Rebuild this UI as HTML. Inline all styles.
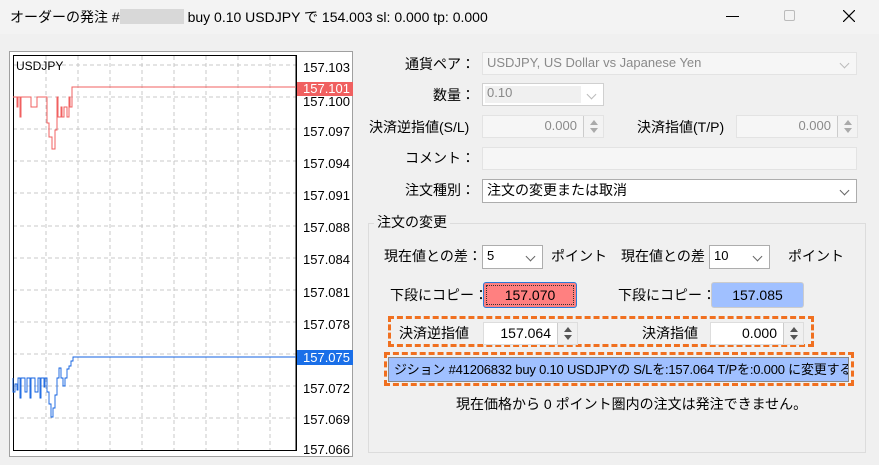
<!DOCTYPE html><html><head><meta charset="utf-8"><style>
*{box-sizing:border-box;margin:0;padding:0}
body{width:879px;height:465px;background:#f0f0f0;font-family:"Liberation Sans","Noto Sans CJK JP",sans-serif;font-size:13px;color:#000;position:relative;overflow:hidden}
.a{position:absolute}
.lbl{position:absolute;white-space:nowrap;line-height:16px}
.r{text-align:right}
.box{position:absolute;border:1px solid #adadad;background:#fff;line-height:20px;padding-left:4px;white-space:nowrap}
.dis{background:#f6f6f6;border-color:#e3e3e3;color:#8a8a8a}
.chev{position:absolute;right:8px;top:7px;width:7px;height:7px;border-right:1px solid #666;border-bottom:1px solid #666;transform:rotate(45deg)}
.sp{position:absolute;top:0;bottom:0;width:20px;border-left:1px solid #ccc;background:#f3f3f3}
.sp:before{content:"";position:absolute;left:6px;top:4px;border:4px solid transparent;border-top:0;border-bottom:5px solid #555}
.sp:after{content:"";position:absolute;left:6px;bottom:4px;border:4px solid transparent;border-bottom:0;border-top:5px solid #555}
.dis .sp:before{border-bottom-color:#aaa}.dis .sp:after{border-top-color:#aaa}
.pl{position:absolute;left:303px;font-size:13px;line-height:14px}
</style></head><body>
<div class="a" style="left:0;top:0;width:879px;height:34px;background:#f3f3f3"></div>
<div class="lbl" style="left:10px;top:9px;font-size:14px">オーダーの発注 #<span style="display:inline-block;width:64px;height:15px;background:#d8d8d8;vertical-align:-2px"></span> buy 0.10 USDJPY で 154.003 sl: 0.000 tp: 0.000</div>
<div class="a" style="left:726px;top:16px;width:13px;height:1px;background:#000"></div>
<div class="a" style="left:784px;top:10px;width:11px;height:11px;border:1px solid #bbb;border-radius:2px"></div>
<svg class="a" style="left:843px;top:10px" width="12" height="12"><path d="M0 0L12 12M12 0L0 12" stroke="#000" stroke-width="1.2"/></svg>

<div class="a" style="left:9px;top:51px;width:344px;height:406px;background:#fff;border:1px solid #a0a0a0"></div>
<svg class="a" style="left:0;top:0" width="360" height="465">
<g stroke="#c8c8c8" stroke-dasharray="4,3" stroke-width="1">
<path d="M46 56V450M78 56V450M110 56V450M142 56V450M174 56V450M206 56V450M238 56V450M270 56V450"/>
<path d="M13 65H296M13 97H296M13 129H296M13 161H296M13 193H296M13 226H296M13 258H296M13 290H296M13 322H296M13 354H296M13 386H296M13 418H296"/>
</g>
<rect x="13.5" y="55.5" width="283" height="395" fill="none" stroke="#000"/>
<path d="M296 55V450" stroke="#000"/>
<path d="M13 97H17V107H18V97H20V117H21V97H31V107H37V97H47V123H49V137H52V149H55V130H57V97H58V117H61V107H62V117H64V107H67V117H69V97H70V107H72V87H296" fill="none" stroke="#f06060"/>
<path d="M13 378V392H15V384H17V390H18V378H20V398H21V378H25V392H27V378H30V398H31V378H35V392H38V378H40V398H41V378H44V387H45V378H47V392H49V404H51V417H53V408H55V395H57V378H59V368H61V378H63V386H65V378H67V369H69V366H71V361H73V357H296" fill="none" stroke="#1060e0" stroke-width="0.9"/>
<path d="M296 357H300" stroke="#000"/>
</svg>
<div class="lbl" style="left:16px;top:58px;font-size:12px">USDJPY</div>
<div class="pl" style="top:61px">157.103</div>
<div class="a" style="left:297px;top:82px;width:56px;height:14px;background:#f06060"></div>
<div class="pl" style="top:82px;color:#fff">157.101</div>
<div class="pl" style="top:95px;clip-path:inset(2px 0 0 0)">157.100</div>
<div class="pl" style="top:125px">157.097</div>
<div class="pl" style="top:157px">157.094</div>
<div class="pl" style="top:189px">157.091</div>
<div class="pl" style="top:221px">157.088</div>
<div class="pl" style="top:253px">157.084</div>
<div class="pl" style="top:286px">157.081</div>
<div class="pl" style="top:318px">157.078</div>
<div class="a" style="left:297px;top:350px;width:56px;height:15px;background:#1a6fe8"></div>
<div class="pl" style="top:351px;color:#fff">157.075</div>
<div class="pl" style="top:382px">157.072</div>
<div class="pl" style="top:413px">157.069</div>
<div class="pl" style="top:443px">157.066</div>

<div class="lbl r" style="left:380px;width:95px;top:56px;font-size:14px">通貨ペア：</div>
<div class="box dis" style="left:482px;top:52px;width:375px;height:23px">USDJPY, US Dollar vs Japanese Yen<i class="chev" style="border-color:#bbb"></i></div>
<div class="lbl r" style="left:380px;width:95px;top:87px;font-size:14px">数量：</div>
<div class="box" style="left:482px;top:83px;width:122px;height:23px;border-color:#d0d0d0;color:#888;background:#fff"><span style="display:block;position:absolute;left:2px;top:2px;width:96px;height:17px;background:#f0f0f0"></span><span style="position:relative;top:-1px">0.10</span><i class="chev" style="border-color:#bbb"></i></div>
<div class="lbl" style="left:369px;top:119px;font-size:14px">決済逆指値(S/L)</div>
<div class="box dis" style="left:482px;top:115px;width:122px;height:23px;text-align:right;padding-right:26px">0.000<span class="sp" style="right:0"></span></div>
<div class="lbl" style="left:637px;top:119px;font-size:14px">決済指値(T/P)</div>
<div class="box dis" style="left:736px;top:115px;width:122px;height:23px;text-align:right;padding-right:26px">0.000<span class="sp" style="right:0"></span></div>
<div class="lbl r" style="left:380px;width:95px;top:150px;font-size:14px">コメント：</div>
<div class="box dis" style="left:482px;top:147px;width:375px;height:23px"></div>
<div class="lbl r" style="left:380px;width:95px;top:182px;font-size:14px">注文種別：</div>
<div class="box" style="left:482px;top:179px;width:375px;height:24px;font-size:14px">注文の変更または取消<i class="chev"></i></div>

<div class="a" style="left:368px;top:223px;width:498px;height:230px;border:1px solid #dcdcdc"></div>
<div class="lbl" style="left:374px;top:214px;background:#f0f0f0;padding:0 3px;font-size:14px">注文の変更</div>
<div class="lbl" style="left:384px;top:248px;font-size:14px">現在値との差：</div>
<div class="box" style="left:482px;top:245px;width:61px;height:24px">5<i class="chev"></i></div>
<div class="lbl" style="left:551px;top:248px;font-size:14px">ポイント</div>
<div class="lbl" style="left:621px;top:248px;font-size:14px">現在値との差</div>
<div class="box" style="left:709px;top:245px;width:61px;height:24px">10<i class="chev"></i></div>
<div class="lbl" style="left:788px;top:248px;font-size:14px">ポイント</div>
<div class="lbl" style="left:390px;top:287px;font-size:14px">下段にコピー：</div>
<div class="a" style="left:483px;top:282px;width:94px;height:26px;border:1px solid #2a7ad8;border-radius:3px;background:#ff8080;text-align:center;line-height:24px;font-size:14px"><span style="position:absolute;inset:2px;border:1px dotted #333"></span>157.070</div>
<div class="lbl" style="left:618px;top:287px;font-size:14px">下段にコピー：</div>
<div class="a" style="left:711px;top:282px;width:93px;height:26px;border:1px solid #ccc;border-radius:3px;background:#a0c0ff;text-align:center;line-height:24px;font-size:14px">157.085</div>

<div class="a" style="left:388px;top:316px;width:426px;height:31px;border:3px dashed #f07020"></div>
<div class="lbl" style="left:399px;top:325px;font-size:14px">決済逆指値</div>
<div class="box" style="left:483px;top:322px;width:95px;height:23px;border-color:#ddd;text-align:right;padding-right:26px;font-size:14px">157.064<span class="sp" style="right:0;background:#f0f0f0"></span></div>
<div class="lbl" style="left:642px;top:325px;font-size:14px">決済指値</div>
<div class="box" style="left:710px;top:322px;width:94px;height:23px;border-color:#ddd;text-align:right;padding-right:26px;font-size:14px">0.000<span class="sp" style="right:0;background:#f0f0f0"></span></div>
<div class="a" style="left:384px;top:352px;width:470px;height:34px;border:3px dashed #f07020"></div>
<div class="a" style="left:388px;top:357px;width:461px;height:25px;border:1px solid #888;background:#a0c0ff;line-height:23px;font-size:13px;letter-spacing:-0.2px;white-space:nowrap;overflow:hidden;padding-left:5px">ジション #41206832 buy 0.10 USDJPYの S/Lを:157.064 T/Pを:0.000 に変更する</div>
<div class="lbl" style="left:456px;top:396px;font-size:14px">現在価格から 0 ポイント圏内の注文は発注できません。</div>
</body></html>
